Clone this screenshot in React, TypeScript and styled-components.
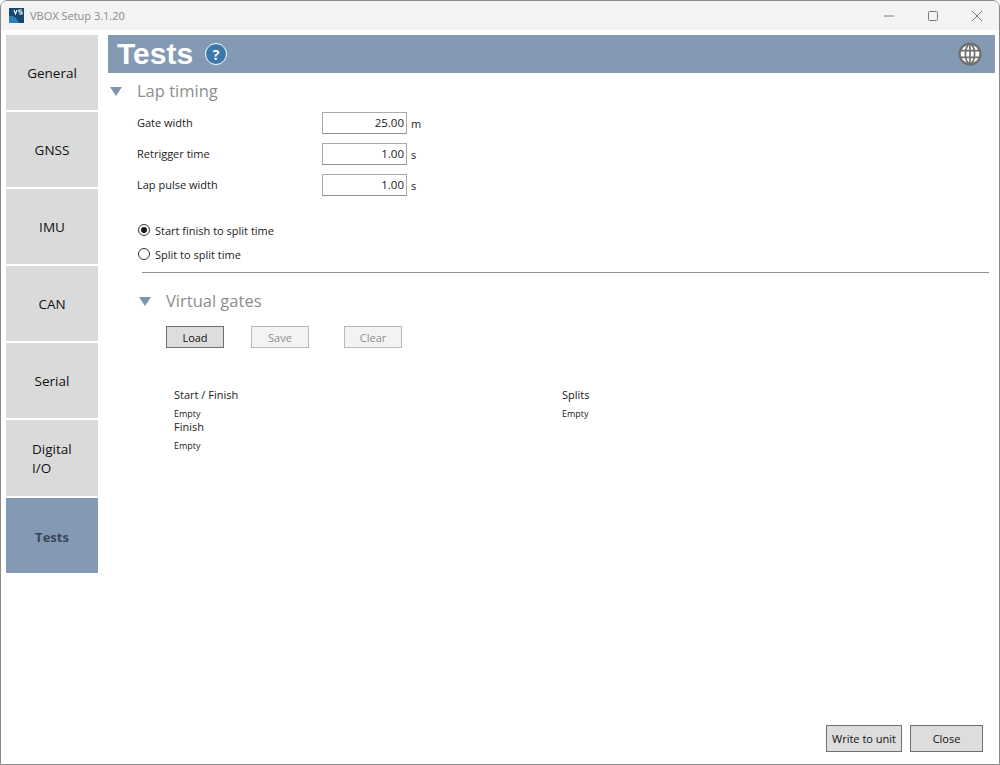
import styled, { createGlobalStyle } from 'styled-components';

const GlobalStyle = createGlobalStyle`
    html, body {
        margin: 0;
        padding: 0;
        background: #ffffff;
    }
    body {
        font-family: "Open Sans", "Noto Sans", sans-serif;
        color: #1a1a1a;
    }
`;

const Window = styled.div`
    box-sizing: border-box;
    width: 1000px;
    height: 765px;
    border: 1px solid #8a8a8a;
    border-radius: 7px 7px 0 0;
    display: flex;
    flex-direction: column;
    background: #ffffff;
    overflow: hidden;
`;

const TitleBar = styled.div`
    height: 29px;
    flex: none;
    background: #f3f3f3;
    display: flex;
    align-items: center;
    padding-left: 8px;
`;

const AppTitle = styled.span`
    margin-left: 6px;
    font-size: 11px;
    color: #8b8b8b;
`;

const WindowControls = styled.div`
    margin-left: auto;
    display: flex;
    align-items: center;
    gap: 34px;
    padding-right: 17px;
    color: #7a7a7a;
`;

const Body = styled.div`
    flex: 1;
    display: flex;
    padding: 5px 4px 12px 5px;
    min-height: 0;
`;

const Nav = styled.nav`
    width: 92px;
    flex: none;
    display: flex;
    flex-direction: column;
    gap: 2px;
`;

const NavItem = styled.div<{ $active?: boolean; $tall?: boolean }>`
    box-sizing: border-box;
    height: ${props => (props.$tall ? 76 : 75)}px;
    flex: none;
    padding-top: ${props => (props.$active ? 4 : 2)}px;
    display: flex;
    align-items: center;
    justify-content: center;
    background: ${props => (props.$active ? '#849ab4' : '#dadada')};
    color: ${props => (props.$active ? '#3c4656' : '#111111')};
    font-size: ${props => (props.$active ? 13 : 13.5)}px;
    font-weight: ${props => (props.$active ? 700 : 400)};
    line-height: 19px;
`;

const NavLabel = styled.span`
    width: 40px;
`;

const Main = styled.main`
    flex: 1;
    margin-left: 10px;
    display: flex;
    flex-direction: column;
    min-width: 0;
`;

const PageHeader = styled.header`
    height: 38px;
    flex: none;
    background: #849ab4;
    display: flex;
    align-items: center;
    padding: 0 13px 0 9px;
`;

const PageTitle = styled.h1`
    margin: 0;
    font-family: "Liberation Sans", Arial, sans-serif;
    font-size: 30px;
    font-weight: 700;
    color: #ffffff;
`;

const HelpBadge = styled.div`
    box-sizing: border-box;
    width: 22px;
    height: 22px;
    margin-left: 12px;
    border-radius: 50%;
    border: 1.5px solid #ffffff;
    background: #3b78ac;
    color: #ffffff;
    font-size: 14px;
    font-weight: 700;
    display: flex;
    align-items: center;
    justify-content: center;
`;

const GlobeSlot = styled.div`
    margin-left: auto;
    display: flex;
`;

const SectionHead = styled.div<{ $indent: number; $top?: number }>`
    display: flex;
    align-items: center;
    height: 36px;
    margin-top: ${props => props.$top || 0}px;
    padding-left: ${props => props.$indent}px;
`;

const Arrow = styled.span`
    width: 0;
    height: 0;
    border-left: 6px solid transparent;
    border-right: 6px solid transparent;
    border-top: 9px solid #7e94ae;
`;

const SectionTitle = styled.span`
    margin-left: 15px;
    padding-bottom: 2px;
    font-size: 16.5px;
    color: #8d8d8d;
`;

const FieldList = styled.div`
    display: flex;
    flex-direction: column;
    gap: 9px;
    padding: 3px 0 0 29px;
`;

const FieldRow = styled.div`
    display: flex;
    align-items: center;
    height: 22px;
`;

const FieldLabel = styled.span`
    width: 185px;
    font-size: 11px;
    line-height: 22px;
    align-self: flex-start;
`;

const ValueBox = styled.div`
    box-sizing: border-box;
    width: 85px;
    height: 22px;
    border: 1px solid #ababab;
    border-bottom-color: #8f8f8f;
    padding-right: 2px;
    font-size: 11.5px;
    line-height: 20px;
    text-align: right;
`;

const Unit = styled.span`
    margin-left: 4px;
    font-size: 11px;
`;

const RadioGroup = styled.div`
    display: flex;
    flex-direction: column;
    gap: 10px;
    padding: 27px 0 0 30px;
`;

const RadioRow = styled.label`
    display: flex;
    align-items: center;
    gap: 5px;
    height: 14px;
    font-size: 11px;
`;

const RadioDot = styled.span<{ $checked?: boolean }>`
    box-sizing: border-box;
    width: 12px;
    height: 12px;
    border-radius: 50%;
    border: 1px solid #333333;
    display: flex;
    align-items: center;
    justify-content: center;
    &::after {
        content: '';
        display: ${props => (props.$checked ? 'block' : 'none')};
        width: 6px;
        height: 6px;
        border-radius: 50%;
        background: #1a1a1a;
    }
`;

const Divider = styled.hr`
    margin: 11px 6px 0 34px;
    border: none;
    border-top: 1px solid #8f8f8f;
`;

const ButtonRow = styled.div`
    display: flex;
    padding: 7px 0 0 58px;
`;

const ActionButton = styled.button<{ $width: number; $gap?: number }>`
    box-sizing: border-box;
    width: ${props => props.$width}px;
    height: 22px;
    margin-left: ${props => props.$gap || 0}px;
    padding: 0;
    border: 1px solid ${props => (props.disabled ? '#b9b9b9' : '#6e6e6e')};
    background: ${props => (props.disabled ? '#f3f3f3' : '#dddddd')};
    color: ${props => (props.disabled ? '#8e8e8e' : '#111111')};
    font-family: inherit;
    font-size: 11px;
`;

const GatesGrid = styled.div`
    display: grid;
    grid-template-columns: 388px 1fr;
    padding: 39px 0 0 66px;
`;

const GateColumn = styled.div`
    display: flex;
    flex-direction: column;
`;

const GateTitle = styled.div`
    font-size: 11px;
    line-height: 16px;
`;

const GateValue = styled.div`
    box-sizing: border-box;
    height: 16px;
    padding-top: 5px;
    font-size: 9px;
    line-height: 12px;
`;

const Footer = styled.footer`
    margin-top: auto;
    display: flex;
    justify-content: flex-end;
    gap: 8px;
    padding-right: 12px;
`;

const FooterButton = styled.button<{ $width: number }>`
    box-sizing: border-box;
    width: ${props => props.$width}px;
    height: 27px;
    padding: 0;
    border: 1px solid #6f6f6f;
    background: #dddddd;
    color: #111111;
    font-family: inherit;
    font-size: 11px;
`;

const navItems = ['General', 'GNSS', 'IMU', 'CAN', 'Serial'];

const AppIcon = () => (
    <svg width="15" height="15" viewBox="0 0 15 15">
        <rect width="15" height="15" fill="#15476f" />
        <path d="M0 15 L0 8 Q6 6 10 15 Z" fill="#2f7fb5" />
        <path d="M5 2 L6.5 6 L8 2 M13 2 H10 V4 H13 V6 H10" fill="none" stroke="#ffffff" strokeWidth="1.1" />
    </svg>
);

const MinimizeIcon = () => (
    <svg width="10" height="10" viewBox="0 0 10 10">
        <path d="M0 5 H10" stroke="currentColor" strokeWidth="1" />
    </svg>
);

const MaximizeIcon = () => (
    <svg width="10" height="10" viewBox="0 0 10 10">
        <rect x="0.5" y="0.5" width="9" height="9" rx="1" fill="none" stroke="currentColor" strokeWidth="1" />
    </svg>
);

const CloseIcon = () => (
    <svg width="10" height="10" viewBox="0 0 10 10">
        <path d="M0 0 L10 10 M10 0 L0 10" stroke="currentColor" strokeWidth="1" />
    </svg>
);

const GlobeIcon = () => (
    <svg width="24" height="24" viewBox="0 0 24 24">
        <circle cx="12" cy="12" r="11.5" fill="#6f6f6f" />
        <circle cx="12" cy="12" r="9.3" fill="#ffffff" />
        <ellipse cx="12" cy="12" rx="4.6" ry="9.8" fill="none" stroke="#6f6f6f" strokeWidth="1.7" />
        <path d="M12 2 V22 M2.5 8.6 H21.5 M2.5 15.4 H21.5" stroke="#6f6f6f" strokeWidth="1.7" />
    </svg>
);

const App = () => {
    return (
        <Window>
            <GlobalStyle />
            <TitleBar>
                <AppIcon />
                <AppTitle>VBOX Setup 3.1.20</AppTitle>
                <WindowControls>
                    <MinimizeIcon />
                    <MaximizeIcon />
                    <CloseIcon />
                </WindowControls>
            </TitleBar>
            <Body>
                <Nav>
                    {navItems.map(item => (
                        <NavItem key={item}>{item}</NavItem>
                    ))}
                    <NavItem $tall><NavLabel>Digital I/O</NavLabel></NavItem>
                    <NavItem $active>Tests</NavItem>
                </Nav>
                <Main>
                    <PageHeader>
                        <PageTitle>Tests</PageTitle>
                        <HelpBadge>?</HelpBadge>
                        <GlobeSlot><GlobeIcon /></GlobeSlot>
                    </PageHeader>
                    <SectionHead $indent={2}>
                        <Arrow />
                        <SectionTitle>Lap timing</SectionTitle>
                    </SectionHead>
                    <FieldList>
                        <FieldRow>
                            <FieldLabel>Gate width</FieldLabel>
                            <ValueBox>25.00</ValueBox>
                            <Unit>m</Unit>
                        </FieldRow>
                        <FieldRow>
                            <FieldLabel>Retrigger time</FieldLabel>
                            <ValueBox>1.00</ValueBox>
                            <Unit>s</Unit>
                        </FieldRow>
                        <FieldRow>
                            <FieldLabel>Lap pulse width</FieldLabel>
                            <ValueBox>1.00</ValueBox>
                            <Unit>s</Unit>
                        </FieldRow>
                    </FieldList>
                    <RadioGroup>
                        <RadioRow><RadioDot $checked />Start finish to split time</RadioRow>
                        <RadioRow><RadioDot />Split to split time</RadioRow>
                    </RadioGroup>
                    <Divider />
                    <SectionHead $indent={31} $top={10}>
                        <Arrow />
                        <SectionTitle>Virtual gates</SectionTitle>
                    </SectionHead>
                    <ButtonRow>
                        <ActionButton $width={58}>Load</ActionButton>
                        <ActionButton $width={58} $gap={27} disabled>Save</ActionButton>
                        <ActionButton $width={58} $gap={35} disabled>Clear</ActionButton>
                    </ButtonRow>
                    <GatesGrid>
                        <GateColumn>
                            <GateTitle>Start / Finish</GateTitle>
                            <GateValue>Empty</GateValue>
                            <GateTitle>Finish</GateTitle>
                            <GateValue>Empty</GateValue>
                        </GateColumn>
                        <GateColumn>
                            <GateTitle>Splits</GateTitle>
                            <GateValue>Empty</GateValue>
                        </GateColumn>
                    </GatesGrid>
                    <Footer>
                        <FooterButton $width={76}>Write to unit</FooterButton>
                        <FooterButton $width={73}>Close</FooterButton>
                    </Footer>
                </Main>
            </Body>
        </Window>
    );
};

export default App;
